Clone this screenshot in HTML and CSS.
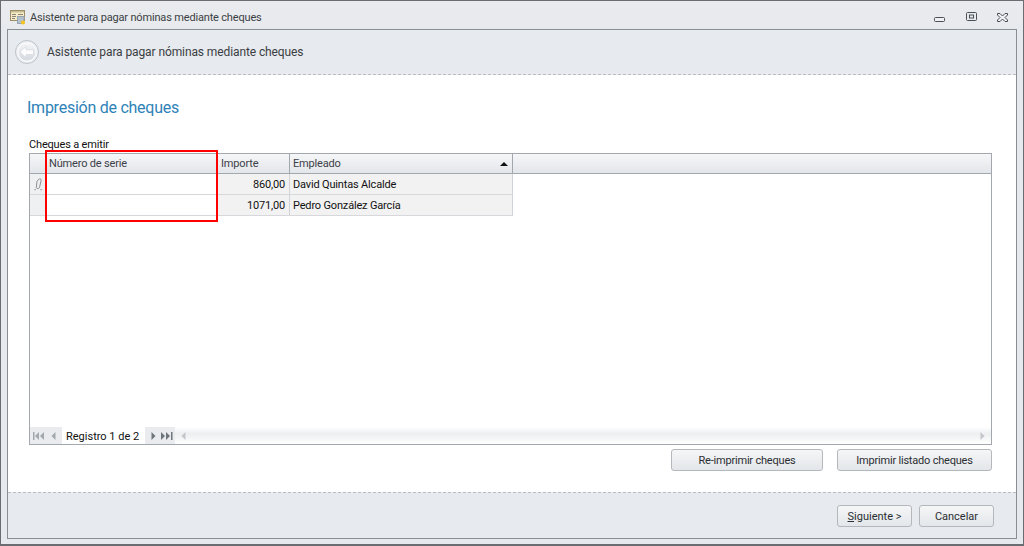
FILE: index.html
```html
<!DOCTYPE html>
<html lang="es">
<head>
<meta charset="utf-8">
<title>Asistente para pagar nóminas mediante cheques</title>
<link rel="stylesheet" href="styles.css">
</head>
<body>
<div class="window">
  <div class="titlebar">
    <svg class="app-icon" width="16" height="16" viewBox="0 0 16 16">
      <rect x="0.5" y="1.5" width="14" height="10" fill="#f6eccb" stroke="#9c8f68"/>
      <rect x="1" y="2" width="13" height="1.5" fill="#c9bd92"/>
      <path d="M2 5.5h4M8 5.5h5M2 7.5h4M2 9.5h3" stroke="#8a856e" fill="none"/>
      <rect x="7.5" y="7.5" width="6.5" height="7" fill="#b4c0cc" stroke="#98a4b0"/>
      <circle cx="13" cy="13.5" r="2" fill="#f6c41a"/>
    </svg>
    <span class="title-text">Asistente para pagar nóminas mediante cheques</span>
    <div class="win-buttons">
      <svg width="12" height="5" viewBox="0 0 12 5" class="win-min"><rect x="0.5" y="0.5" width="10" height="4" rx="1" fill="#eef0f3" stroke="#4a4f55"/></svg>
      <svg width="11" height="10" viewBox="0 0 11 10" class="win-max"><rect x="0.5" y="0.5" width="10" height="8" rx="1" fill="none" stroke="#4a4f55"/><rect x="3.5" y="3" width="4" height="3" fill="none" stroke="#4a4f55"/></svg>
      <svg width="11" height="9" viewBox="0 0 11 9" class="win-close"><path d="M0.5 0.5h2.5l2.5 2.5 2.5-2.5h2.5v1.5l-2.5 2.5 2.5 2.5v1.5h-2.5l-2.5-2.5-2.5 2.5h-2.5v-1.5l2.5-2.5-2.5-2.5z" fill="#eef0f3" stroke="#4a4f55" stroke-width="1"/></svg>
    </div>
  </div>
  <div class="frame">
    <header class="wizard-head">
      <svg class="back" width="24" height="24" viewBox="0 0 24 24">
        <defs><linearGradient id="bg" x1="0" y1="0" x2="0" y2="1"><stop offset="0" stop-color="#f4f5f7"/><stop offset="1" stop-color="#d3d8df"/></linearGradient></defs>
        <circle cx="12" cy="12" r="11.5" fill="#eef0f3" stroke="#bcc2ca"/>
        <circle cx="12" cy="12" r="9" fill="url(#bg)" stroke="#fff" stroke-width="0.8"/>
        <path d="M5 12l6-5.5v3.5h7.5v4.5h-7.5v3z" fill="#fdfdfe" stroke="#d4d9df" stroke-width="0.7" stroke-linejoin="round"/>
      </svg>
      <span class="head-text">Asistente para pagar nóminas mediante cheques</span>
    </header>
    <main class="content">
      <h1 class="page-title">Impresión de cheques</h1>
      <div class="grid-label">Cheques a emitir</div>
      <div class="grid">
        <div class="grid-head">
          <div class="cell ind"></div>
          <div class="cell col-num">Número de serie</div>
          <div class="cell col-imp">Importe</div>
          <div class="cell col-emp">Empleado<span class="sort"></span></div>
        </div>
        <div class="row">
          <div class="cell ind"><svg class="pencil" width="9" height="13" viewBox="0 0 9 13"><path d="M4.5 1.5c1-1.2 3-.8 2.7.7L5.5 9.5c-.3 1.2-3 1.5-3.2 0L3 3.5z" fill="none" stroke="#8a8f96"/><path d="M0.5 11h1.2v1.2H0.5zM6.5 11h1.2v1.2H6.5z" fill="#8a8f96"/></svg></div>
          <div class="cell col-num blank"></div>
          <div class="cell col-imp num">860,00</div>
          <div class="cell col-emp">David Quintas Alcalde</div>
        </div>
        <div class="row">
          <div class="cell ind"></div>
          <div class="cell col-num blank"></div>
          <div class="cell col-imp num">1071,00</div>
          <div class="cell col-emp">Pedro González García</div>
        </div>
        <div class="grid-body"></div>
        <div class="nav">
          <div class="nav-btns">
            <svg width="12" height="8" viewBox="0 0 12 8"><path d="M0 0h1.5v8H0zM6 0v8L2 4zM11 0v8L7 4z" fill="#a3a9b0"/></svg>
            <svg width="5" height="8" viewBox="0 0 5 8"><path d="M4.5 0v8L0.5 4z" fill="#a3a9b0"/></svg>
          </div>
          <span class="nav-text">Registro 1 de 2</span>
          <div class="nav-btns next">
            <svg width="5" height="8" viewBox="0 0 5 8"><path d="M0.5 0v8L4.5 4z" fill="#6f757c"/></svg>
            <svg width="12" height="8" viewBox="0 0 12 8"><path d="M0 0v8L4 4zM5 0v8L9 4zM10 0h1.5v8H10z" fill="#6f757c"/></svg>
          </div>
          <div class="scroll">
            <svg width="5" height="8" viewBox="0 0 5 8"><path d="M4.5 0v8L0.5 4z" fill="#c3c7cc"/></svg>
            <svg width="5" height="8" viewBox="0 0 5 8"><path d="M0.5 0v8L4.5 4z" fill="#c3c7cc"/></svg>
          </div>
        </div>
      </div>
      <div class="actions">
        <button class="btn btn-re">Re-imprimir cheques</button>
        <button class="btn btn-list">Imprimir listado cheques</button>
      </div>
    </main>
    <footer class="wizard-foot">
      <button class="btn btn-foot"><span class="ul">S</span>iguiente &gt;</button>
      <button class="btn btn-foot">Cancelar</button>
    </footer>
  </div>
  <div class="highlight"></div>
</div>
</body>
</html>
```
FILE: styles.css
```css
* { box-sizing: border-box; }
html, body { margin: 0; padding: 0; }
body { width: 1024px; height: 546px; overflow: hidden; font-family: Roboto, sans-serif; font-size: 11px; letter-spacing: -0.17px; color: #1c1c1c; }
.window { position: relative; width: 1024px; height: 546px; background: linear-gradient(#e9ebee, #e6e9ed 60px); border: 1px solid #6a6e73; border-bottom-width: 2px; display: flex; flex-direction: column; padding: 0 6px 5px 6px; }
.titlebar { height: 28px; display: flex; align-items: center; margin: 0 -3px; padding: 4px 0 0 6px; flex: none; }
.app-icon { margin-right: 4px; margin-top: -1px; }
.title-text { font-size: 11px; color: #3c3f44; }
.win-buttons { margin-left: auto; display: flex; align-items: center; padding-right: 12px; }
.win-min { margin-right: 20px; margin-top: 4px; }
.win-max { margin-right: 20px; }
.frame { flex: 1; border: 1px solid #8a8f95; display: flex; flex-direction: column; min-height: 0; }
.wizard-head { height: 45px; flex: none; background: #e7eaee; border-bottom: 1px dashed #b9bdc3; display: flex; align-items: center; padding-left: 7px; }
.back { margin-right: 8px; }
.head-text { font-size: 12px; letter-spacing: -0.1px; color: #3b3e44; }
.content { flex: 1; background: #fff; padding: 0 24px 0 19px; display: flex; flex-direction: column; min-height: 0; }
.page-title { margin: 23px 0 0; font-weight: 400; font-size: 16px; line-height: 20px; letter-spacing: -0.25px; color: #2e82b8; }
.grid-label { margin: 20px 0 0 2px; line-height: 13px; height: 15px; color: #111; }
.grid { margin-left: 2px; height: 292px; border: 1px solid #a3a8af; display: flex; flex-direction: column; }
.grid-head { display: flex; height: 20px; flex: none; background: linear-gradient(#f5f6f8, #e3e6ea); border-bottom: 1px solid #a3a8af; color: #3c4048; }
.cell { padding: 0 3px; line-height: 19px; border-right: 1px solid #cfd2d6; white-space: nowrap; }
.grid-head .cell { border-right-color: #a3a8af; }
.ind { width: 16px; flex: none; display: flex; align-items: center; justify-content: center; padding: 0; background: #eff0f1; }
.grid-head .ind { background: none; }
.pencil { margin-left: 1px; }
.col-num { width: 172px; flex: none; }
.col-imp { width: 72px; flex: none; }
.col-emp { width: 223px; flex: none; display: flex; align-items: center; justify-content: space-between; }
.sort { width: 0; height: 0; border-left: 4px solid transparent; border-right: 4px solid transparent; border-bottom: 4px solid #111; margin-right: 1px; }
.row { display: flex; height: 21px; flex: none; width: 483px; background: #f2f2f2; border-bottom: 1px solid #d6d8db; color: #111; }
.row .cell { line-height: 21px; padding-bottom: 0; }
.row .num { padding-right: 4px; }
.blank { background: #fff; }
.num { text-align: right; }
.grid-body { flex: 1; background: #fff; }
.nav { height: 17px; flex: none; display: flex; align-items: center; background: linear-gradient(#f9f9fa, #fff); }
.nav-btns { display: flex; align-items: center; gap: 6px; height: 17px; padding: 0 0 0 3px; width: 32px; background: #e9ebee; }
.nav-btns.next { width: 30px; gap: 5px; padding-left: 6px; }
.nav-text { width: 83px; padding-left: 4px; background: #fff; height: 17px; line-height: 19px; letter-spacing: 0; color: #111; white-space: nowrap; }
.scroll { flex: 1; display: flex; justify-content: space-between; align-items: center; padding: 0 6px 0 6px; height: 17px; background: linear-gradient(#fff, #eceef0 40%, #fff); }
.actions { display: flex; justify-content: flex-end; gap: 14px; margin-top: 4px; margin-left: 2px; }
.btn { height: 22px; border: 1px solid #b4b8bd; border-radius: 3px; background: linear-gradient(#f5f6f7, #e3e6ea); font-family: Roboto, sans-serif; font-size: 11px; letter-spacing: -0.2px; color: #2b2e33; padding: 0; }
.btn-re { width: 152px; }
.btn-list { width: 155px; }
.wizard-foot { height: 46px; flex: none; background: #e7eaee; border-top: 1px dashed #b9bdc3; display: flex; justify-content: flex-end; align-items: flex-start; gap: 7px; padding: 12px 22px 0 0; }
.btn-foot { width: 75px; letter-spacing: 0; }
.ul { text-decoration: underline; }
.highlight { position: absolute; left: 44px; top: 149px; width: 173px; height: 72px; border: 2px solid #f00; }
```
